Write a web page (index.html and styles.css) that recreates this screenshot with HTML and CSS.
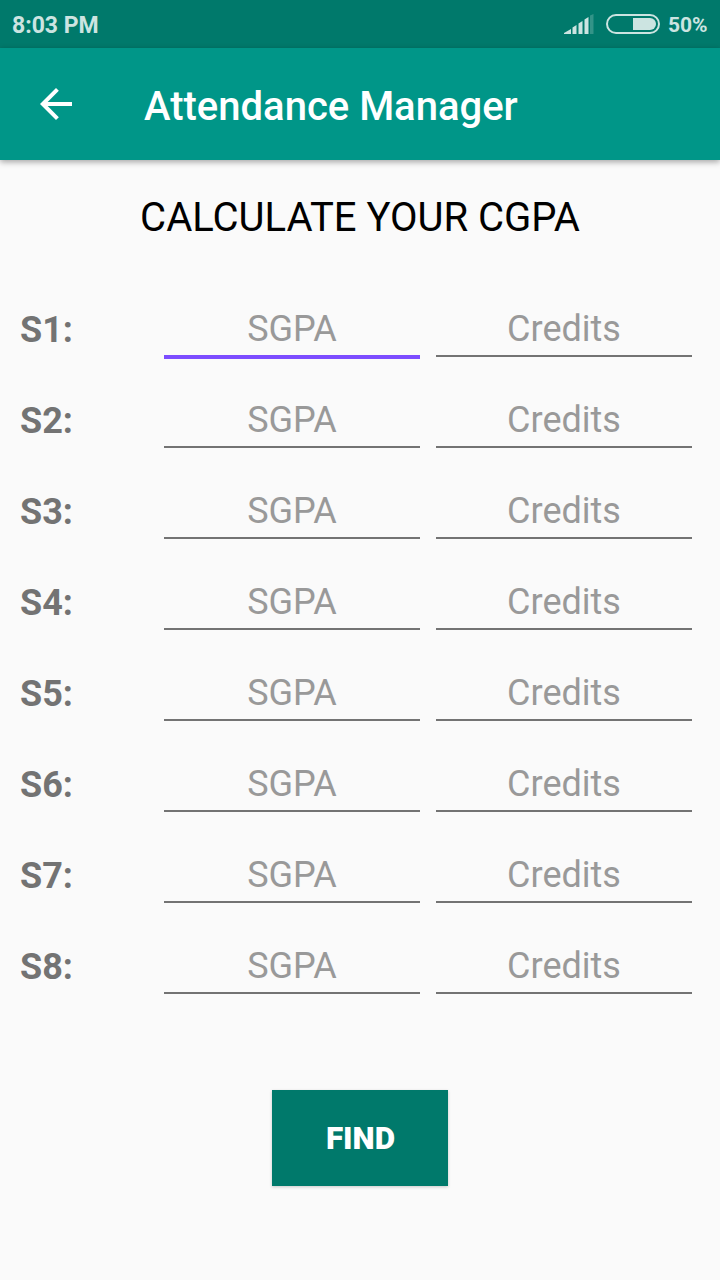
FILE: index.html
```html
<!DOCTYPE html>
<html lang="en">
<head>
<meta charset="utf-8">
<title>Attendance Manager</title>
<link rel="stylesheet" href="styles.css">
</head>
<body>
<div class="status">
  <span class="clock">8:03 PM</span>
  <svg class="signal" width="30" height="20" viewBox="0 0 30 20"><path class="on" d="M0 20v-1l7-4v5zM8.500 20v-6.500l4-2.500v9zM14.500 20V9.500l4-2.500V20zM20.500 20V5.500l4-2.500V20z"/><path class="off" d="M26 20V1.500L29.500 0v20z"/></svg>
  <svg class="battery" width="54" height="20" viewBox="0 0 54 20"><rect class="shell" x="1" y="1" width="52" height="18" rx="9"/><path class="on" d="M27 4h17a6 6 0 0 1 0 12H27z"/></svg>
  <span class="percent">50%</span>
</div>
<header class="appbar">
  <svg class="back" width="32" height="32" viewBox="4 4 16 16"><path d="M20 11H7.830l5.590-5.590L12 4l-8 8 8 8 1.410-1.410L7.830 13H20v-2z"/></svg>
  <h1 class="title">Attendance Manager</h1>
</header>
<main class="content">
  <h2 class="heading">CALCULATE YOUR CGPA</h2>
  <div class="rows">
    <div class="row"><label class="label">S1:</label><input class="field focused" placeholder="SGPA"><input class="field" placeholder="Credits"></div>
    <div class="row"><label class="label">S2:</label><input class="field" placeholder="SGPA"><input class="field" placeholder="Credits"></div>
    <div class="row"><label class="label">S3:</label><input class="field" placeholder="SGPA"><input class="field" placeholder="Credits"></div>
    <div class="row"><label class="label">S4:</label><input class="field" placeholder="SGPA"><input class="field" placeholder="Credits"></div>
    <div class="row"><label class="label">S5:</label><input class="field" placeholder="SGPA"><input class="field" placeholder="Credits"></div>
    <div class="row"><label class="label">S6:</label><input class="field" placeholder="SGPA"><input class="field" placeholder="Credits"></div>
    <div class="row"><label class="label">S7:</label><input class="field" placeholder="SGPA"><input class="field" placeholder="Credits"></div>
    <div class="row"><label class="label">S8:</label><input class="field" placeholder="SGPA"><input class="field" placeholder="Credits"></div>
  </div>
  <button class="find">FIND</button>
</main>
</body>
</html>
```
FILE: styles.css
```css
* { box-sizing: border-box; }
body { margin: 0; height: 1280px; overflow: hidden; background: #fafafa; font-family: Roboto, sans-serif; }
.status { display: flex; align-items: center; height: 48px; padding: 0 12px; background: #00796b; color: #cce4e1; font: 700 23px/46px Roboto, sans-serif; }
.clock { flex: 1; padding-top: 3px; }
.signal { margin-right: 12px; }
.battery { margin-right: 8px; }
.on { fill: #cce4e1; }
.off { fill: #339488; }
.shell { fill: none; stroke: #cce4e1; stroke-width: 2; }
.percent { width: 40px; padding-top: 2px; font-size: 21px; white-space: nowrap; }
.appbar { display: flex; align-items: center; height: 112px; padding-left: 40px; background: #009688; color: #fff; box-shadow: 0 2px 6px rgba(0,0,0,.35); }
.back { fill: #fff; }
.title { margin: 6px 0 0 72px; font-size: 40px; font-weight: 500; line-height: 48px; }
.content { display: flex; flex-direction: column; align-items: center; }
.heading { margin: 34px 0 0; color: #000; font-size: 40px; font-weight: 400; line-height: 48px; }
.rows { width: 100%; padding: 59px 28px 0 20px; }
.row { display: grid; grid-template-columns: 128px 256px 256px; column-gap: 16px; height: 91px; align-items: start; }
.label { padding-top: 8px; color: #737373; font-size: 36px; font-weight: 700; line-height: 43px; }
.field { width: 256px; height: 56px; padding: 2px 0 0; border: 0; border-bottom: 2px solid #737373; border-radius: 0; background: none; text-align: center; font: 400 36px/52px Roboto, sans-serif; outline: 0; }
.field::placeholder { color: #999; opacity: 1; }
.focused { height: 58px; border-bottom: 4px solid #7c4dff; }
.find { width: 176px; height: 96px; margin-top: 61px; padding: 1px 0 0 1px; border: 0; background: #00796b; color: #fff; font: 900 31.500px/38px Roboto, sans-serif; box-shadow: 0 1px 3px rgba(0,0,0,.2); }
```
